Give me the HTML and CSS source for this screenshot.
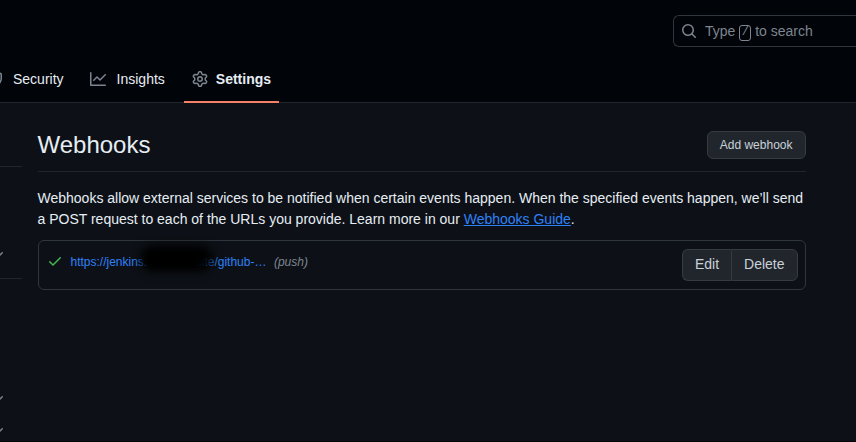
FILE: index.html
```html
<!DOCTYPE html>
<html lang="en">
<head>
<meta charset="utf-8">
<title>Webhooks</title>
<link rel="stylesheet" href="styles.css">
</head>
<body>
<header class="header">
  <div class="topbar">
    <div class="search">
      <svg class="icon" width="16" height="16" viewBox="0 0 16 16"><path d="M10.68 11.74a6 6 0 0 1-7.922-8.982 6 6 0 0 1 8.982 7.922l3.04 3.04a.749.749 0 0 1-.326 1.275.749.749 0 0 1-.734-.215ZM11.5 7a4.499 4.499 0 1 0-8.997 0A4.499 4.499 0 0 0 11.5 7Z"/></svg>
      <span class="search-text">Type <kbd>/</kbd> to search</span>
    </div>
  </div>
  <nav class="tabs">
    <a class="tab tab-security">
      <svg class="icon" width="16" height="16" viewBox="0 0 16 16"><path d="M7.467.133a1.748 1.748 0 0 1 1.066 0l5.25 1.68A1.75 1.75 0 0 1 15 3.48V7c0 1.566-.32 3.182-1.303 4.682-.983 1.498-2.585 2.813-5.032 3.855a1.697 1.697 0 0 1-1.33 0c-2.447-1.042-4.049-2.357-5.032-3.855C1.32 10.182 1 8.566 1 7V3.48a1.75 1.75 0 0 1 1.217-1.667Zm.61 1.429a.25.25 0 0 0-.153 0l-5.25 1.68a.25.25 0 0 0-.174.238V7c0 1.358.275 2.666 1.057 3.86.784 1.194 2.121 2.34 4.366 3.297a.196.196 0 0 0 .154 0c2.245-.956 3.582-2.104 4.366-3.298C13.225 9.666 13.5 8.36 13.5 7V3.48a.251.251 0 0 0-.174-.237l-5.25-1.68Z"/></svg>
      <span>Security</span>
    </a>
    <a class="tab tab-insights">
      <svg class="icon" width="16" height="16" viewBox="0 0 16 16"><path d="M1.5 1.75V13.5h13.75a.75.75 0 0 1 0 1.5H.75a.75.75 0 0 1-.75-.75V1.75a.75.75 0 0 1 1.5 0Zm14.28 2.53-5.25 5.25a.75.75 0 0 1-1.06 0L7 7.06 4.28 9.78a.751.751 0 0 1-1.042-.018.751.751 0 0 1-.018-1.042l3.25-3.25a.75.75 0 0 1 1.06 0L10 7.94l4.72-4.72a.751.751 0 0 1 1.042.018.751.751 0 0 1 .018 1.042Z"/></svg>
      <span>Insights</span>
    </a>
    <a class="tab tab-active">
      <svg class="icon" width="16" height="16" viewBox="0 0 16 16"><path d="M8 0a8.2 8.2 0 0 1 .701.031C9.444.095 9.99.645 10.16 1.29l.288 1.107c.018.066.079.158.212.224.231.114.454.243.668.386.123.082.233.09.299.071l1.103-.303c.644-.176 1.392.021 1.82.63.27.385.506.792.704 1.218.315.675.111 1.422-.364 1.891l-.814.806c-.049.048-.098.147-.088.294.016.257.016.515 0 .772-.01.147.038.246.088.294l.814.806c.475.469.679 1.216.364 1.891a7.977 7.977 0 0 1-.704 1.217c-.428.61-1.176.807-1.82.63l-1.102-.302c-.067-.019-.177-.011-.3.071a5.909 5.909 0 0 1-.668.386c-.133.066-.194.158-.211.224l-.29 1.106c-.168.646-.715 1.196-1.458 1.26a8.006 8.006 0 0 1-1.402 0c-.743-.064-1.289-.614-1.458-1.26l-.289-1.106c-.018-.066-.079-.158-.212-.224a5.738 5.738 0 0 1-.668-.386c-.123-.082-.233-.09-.299-.071l-1.103.303c-.644.176-1.392-.021-1.82-.63a8.12 8.12 0 0 1-.704-1.218c-.315-.675-.111-1.422.363-1.891l.815-.806c.05-.048.098-.147.088-.294a6.214 6.214 0 0 1 0-.772c.01-.147-.038-.246-.088-.294l-.815-.806C.635 6.045.431 5.298.746 4.623a7.92 7.92 0 0 1 .704-1.217c.428-.61 1.176-.807 1.82-.63l1.102.302c.067.019.177.011.3-.071.214-.143.437-.272.668-.386.133-.066.194-.158.211-.224l.29-1.106C6.009.645 6.556.095 7.299.03 7.53.01 7.764 0 8 0Zm-.571 1.525c-.036.003-.108.036-.137.146l-.289 1.105c-.147.561-.549.967-.998 1.189-.173.086-.34.183-.5.29-.417.278-.97.423-1.529.27l-1.103-.303c-.109-.03-.175.016-.195.045-.22.312-.412.644-.573.99-.014.031-.021.11.059.19l.815.806c.411.406.562.957.53 1.456a4.709 4.709 0 0 0 0 .582c.032.499-.119 1.05-.53 1.456l-.815.806c-.081.08-.073.159-.059.19.162.346.353.677.573.989.02.03.085.076.195.046l1.102-.303c.56-.153 1.113-.008 1.53.27.161.107.328.204.501.29.447.222.85.629.997 1.189l.289 1.105c.029.109.101.143.137.146a6.6 6.6 0 0 0 1.142 0c.036-.003.108-.036.137-.146l.289-1.105c.147-.561.549-.967.998-1.189.173-.086.34-.183.5-.29.417-.278.97-.423 1.529-.27l1.103.303c.109.029.175-.016.195-.045.22-.313.411-.644.573-.99.014-.031.021-.11-.059-.19l-.815-.806c-.411-.406-.562-.957-.53-1.456a4.709 4.709 0 0 0 0-.582c-.032-.499.119-1.05.53-1.456l.815-.806c.081-.08.073-.159.059-.19a6.464 6.464 0 0 0-.573-.989c-.02-.03-.085-.076-.195-.046l-1.102.303c-.56.153-1.113.008-1.53-.27a4.44 4.44 0 0 0-.501-.29c-.447-.222-.85-.629-.997-1.189l-.289-1.105c-.029-.11-.101-.143-.137-.146a6.6 6.6 0 0 0-1.142 0ZM11 8a3 3 0 1 1-6 0 3 3 0 0 1 6 0ZM9.5 8a1.5 1.5 0 1 0-3.001.001A1.5 1.5 0 0 0 9.5 8Z"/></svg>
      <span>Settings</span>
    </a>
  </nav>
</header>
<div class="layout">
  <aside class="sidebar">
    <div class="group group-top"></div>
    <div class="group group-mid">
      <svg class="chevron" width="16" height="16" viewBox="0 0 16 16"><path d="M12.78 5.22a.749.749 0 0 1 0 1.06l-4.25 4.25a.749.749 0 0 1-1.06 0L3.22 6.28a.749.749 0 1 1 1.06-1.06L8 8.939l3.72-3.719a.749.749 0 0 1 1.06 0Z"/></svg>
    </div>
    <div class="group group-end">
      <svg class="chevron" width="16" height="16" viewBox="0 0 16 16"><path d="M12.78 5.22a.749.749 0 0 1 0 1.06l-4.25 4.25a.749.749 0 0 1-1.06 0L3.22 6.28a.749.749 0 1 1 1.06-1.06L8 8.939l3.72-3.719a.749.749 0 0 1 1.06 0Z"/></svg>
      <svg class="chevron" width="16" height="16" viewBox="0 0 16 16"><path d="M12.78 5.22a.749.749 0 0 1 0 1.06l-4.25 4.25a.749.749 0 0 1-1.06 0L3.22 6.28a.749.749 0 1 1 1.06-1.06L8 8.939l3.72-3.719a.749.749 0 0 1 1.06 0Z"/></svg>
    </div>
  </aside>
  <main class="content">
    <div class="subhead">
      <h1>Webhooks</h1>
      <button class="btn btn-small">Add webhook</button>
    </div>
    <p class="intro">Webhooks allow external services to be notified when certain events happen. When the specified events happen, we’ll send a POST request to each of the URLs you provide. Learn more in our <a class="guide">Webhooks Guide</a>.</p>
    <div class="box">
      <svg class="check" width="16" height="16" viewBox="0 0 16 16"><path d="M13.78 4.22a.75.75 0 0 1 0 1.06l-7.25 7.25a.75.75 0 0 1-1.06 0L2.22 9.28a.751.751 0 0 1 .018-1.042.751.751 0 0 1 1.042-.018L6 10.94l6.72-6.72a.75.75 0 0 1 1.06 0Z"/></svg>
      <span class="url"><span>https://jenkins.</span><span class="gap"><i class="smudge"></i></span><span>site/github-…</span></span>
      <em class="event">(push)</em>
      <div class="btn-group"><button class="btn">Edit</button><button class="btn">Delete</button></div>
    </div>
  </main>
</div>
</body>
</html>
```
FILE: styles.css
```css
* { box-sizing: border-box; }
body {
  margin: 0;
  height: 442px;
  overflow: hidden;
  background: #0d1117;
  color: #e6edf3;
  font: 14px/21px "Liberation Sans", Arial, sans-serif;
  border-bottom: 1px solid #06060a;
}
svg { display: block; flex: none; fill: #7d8590; }
.header {
  height: 103px;
  background: #010409;
  border-bottom: 1px solid #21262d;
}
.topbar { display: flex; justify-content: flex-end; padding-top: 15px; height: 55px; }
.search {
  display: flex;
  align-items: center;
  width: 183px;
  height: 32px;
  padding-left: 7px;
  gap: 8px;
  border: 1px solid #30363d;
  border-right: 0;
  border-radius: 6px 0 0 6px;
  color: #7d8590;
}
.search-text { display: flex; align-items: center; white-space: pre; }
kbd {
  width: 12px;
  height: 16px;
  margin-top: 3px;
  border: 1px solid #7d8590;
  border-radius: 3px;
  font: 12px/13px "Liberation Mono", monospace;
  text-align: center;
}
.tabs { display: flex; height: 48px; gap: 10px; }
.tab {
  display: flex;
  align-items: center;
  gap: 10px;
  height: 48px;
  padding: 0 8px;
}
.tab-security { margin-left: -21px; }
.tab-insights { gap: 11px; }
.tab-active {
  gap: 8px;
  margin-left: 1px;
  font-weight: 600;
  border-bottom: 2px solid #f78166;
  padding-top: 2px;
}
.layout { display: flex; height: 338px; }
.sidebar { width: 22px; margin-right: 15.5px; }
.group { border-bottom: 1px solid #21262d; }
.chevron { margin-left: -10px; }
.group-top { height: 64px; }
.group-mid { height: 112px; padding-top: 80px; }
.group-end { display: flex; flex-direction: column; gap: 16px; padding-top: 112px; border: 0; }
.content { width: 768px; padding-top: 28px; }
.subhead {
  display: flex;
  justify-content: space-between;
  height: 41px;
  border-bottom: 1px solid #21262d;
}
h1 { margin: -4px 0 0; font-size: 24px; line-height: 36px; font-weight: 400; }
.btn {
  height: 32px;
  padding: 0 12px;
  border: 1px solid #363b42;
  border-radius: 6px;
  background: #21262d;
  color: #c9d1d9;
  font: 14px/20px "Liberation Sans", Arial, sans-serif;
}
.btn-small { height: 28px; font-size: 12px; }
.btn-group .btn { padding-bottom: 2px; }
.intro { margin: 16px 0 10px; }
.guide { color: #2f81f7; text-decoration: underline; }
.box {
  display: flex;
  height: 50px;
  padding: 8px 7px 0 8px;
  border: 1px solid #30363d;
  border-radius: 6px;
  font-size: 12px;
}
.check { fill: #3fb950; margin-top: 4px; }
.url { display: flex; margin: 3px 0 0 8px; color: #2f81f7; }
.gap { position: relative; z-index: 1; width: 48.5px; }
.smudge {
  position: absolute;
  left: -7px;
  top: -7px;
  width: 74px;
  height: 27px;
  border-radius: 13px;
  background: linear-gradient(to right, #000 80%, rgba(0, 0, 0, 0.8));
  filter: blur(4px);
}
.event { margin: 3px 0 0 7.5px; color: #7d8590; }
.btn-group { display: flex; margin-left: auto; }
.btn-group .btn:first-child { border-radius: 6px 0 0 6px; border-right: 0; }
.btn-group .btn:last-child { border-radius: 0 6px 6px 0; }
```
